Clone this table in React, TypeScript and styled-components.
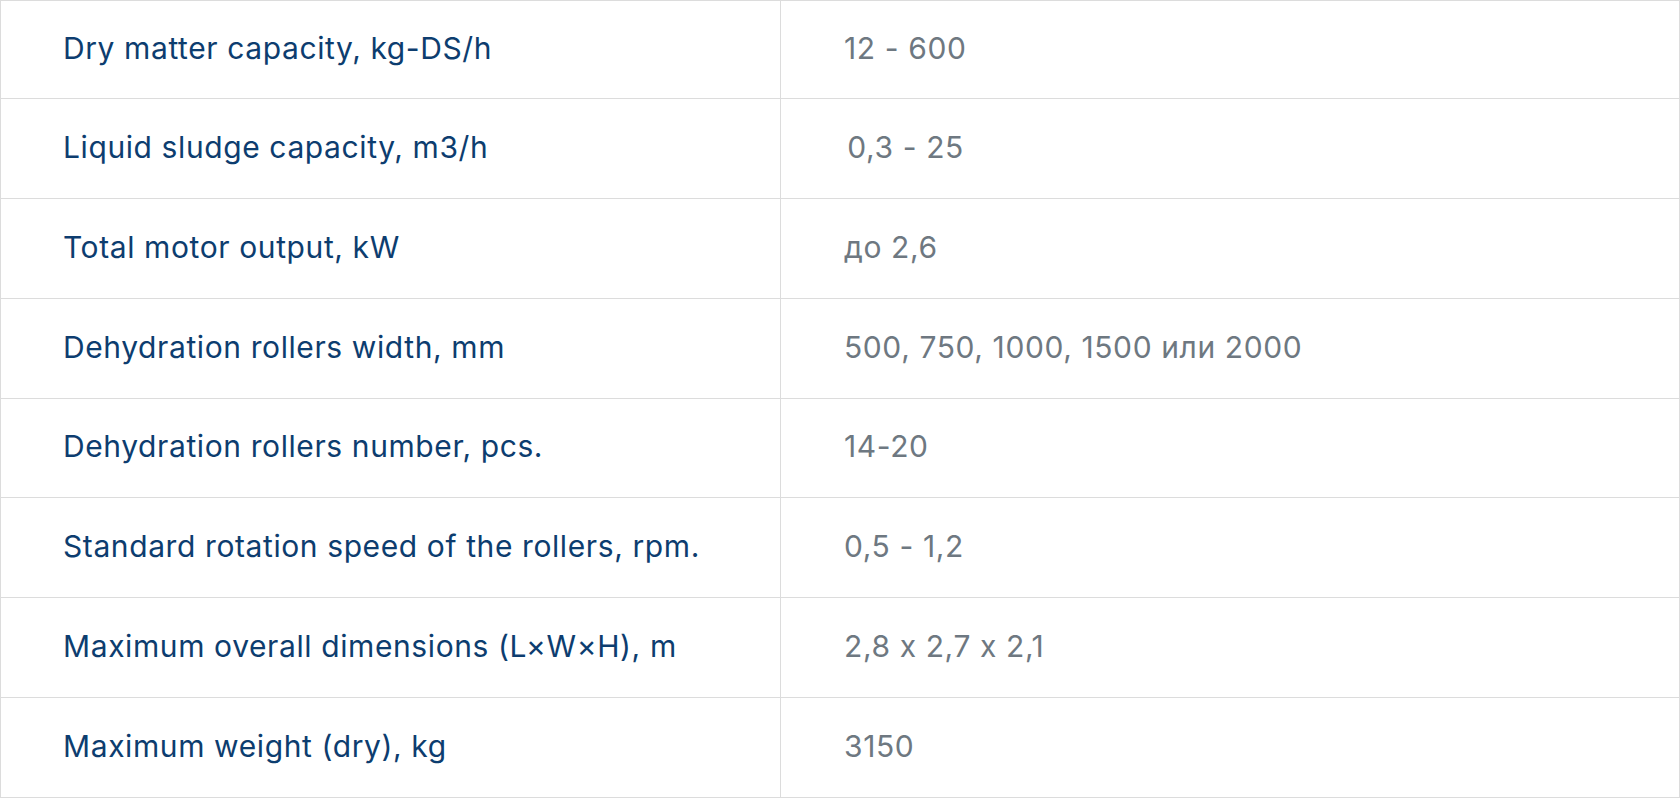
import React, { FC } from "react"
import styled, { createGlobalStyle } from "styled-components"

const GlobalStyle = createGlobalStyle`
    html, body {
        margin: 0;
        padding: 0;
        background: #ffffff;
    }
    * {
        box-sizing: border-box;
    }
`

const Table = styled.div`
    width: 1680px;
    height: 798px;
    display: grid;
    grid-template-rows: 97px repeat(7, 1fr);
    border: 1px solid #dcdcdc;
    font-family: Inter, "Noto Sans", sans-serif;
`

const Row = styled.div`
    display: grid;
    grid-template-columns: 779px 1fr;
    border-top: 1px solid #dcdcdc;

    &:first-child {
        border-top: none;
    }
`

const Cell = styled.div<{ $value?: boolean }>`
    display: flex;
    align-items: center;
    padding-left: ${(props) => (props.$value ? "63px" : "62px")};
    padding-bottom: 3px;
    font-size: 30px;
    letter-spacing: 0.6px;
    color: ${(props) => (props.$value ? "#6e7881" : "#0d3d6f")};
    border-left: ${(props) => (props.$value ? "1px solid #dcdcdc" : "none")};
    white-space: pre;
`

interface Spec {
    label: string
    value: string
}

const specs: Spec[] = [
    { label: "Dry matter capacity, kg-DS/h", value: "12 - 600" },
    { label: "Liquid sludge capacity, m3/h", value: "\u200A0,3 - 25" },
    { label: "Total motor output, kW", value: "до 2,6" },
    { label: "Dehydration rollers width, mm", value: "500, 750, 1000, 1500 или 2000" },
    { label: "Dehydration rollers number, pcs.", value: "14-20" },
    { label: "Standard rotation speed of the rollers, rpm.", value: "0,5 - 1,2" },
    { label: "Maximum overall dimensions (L×W×H), m", value: "2,8 x 2,7 x 2,1" },
    { label: "Maximum weight (dry), kg", value: "3150" },
]

const App: FC = () => (
    <>
        <GlobalStyle />
        <Table>
            {specs.map((spec) => (
                <Row key={spec.label}>
                    <Cell>{spec.label}</Cell>
                    <Cell $value>{spec.value}</Cell>
                </Row>
            ))}
        </Table>
    </>
)

export default App
